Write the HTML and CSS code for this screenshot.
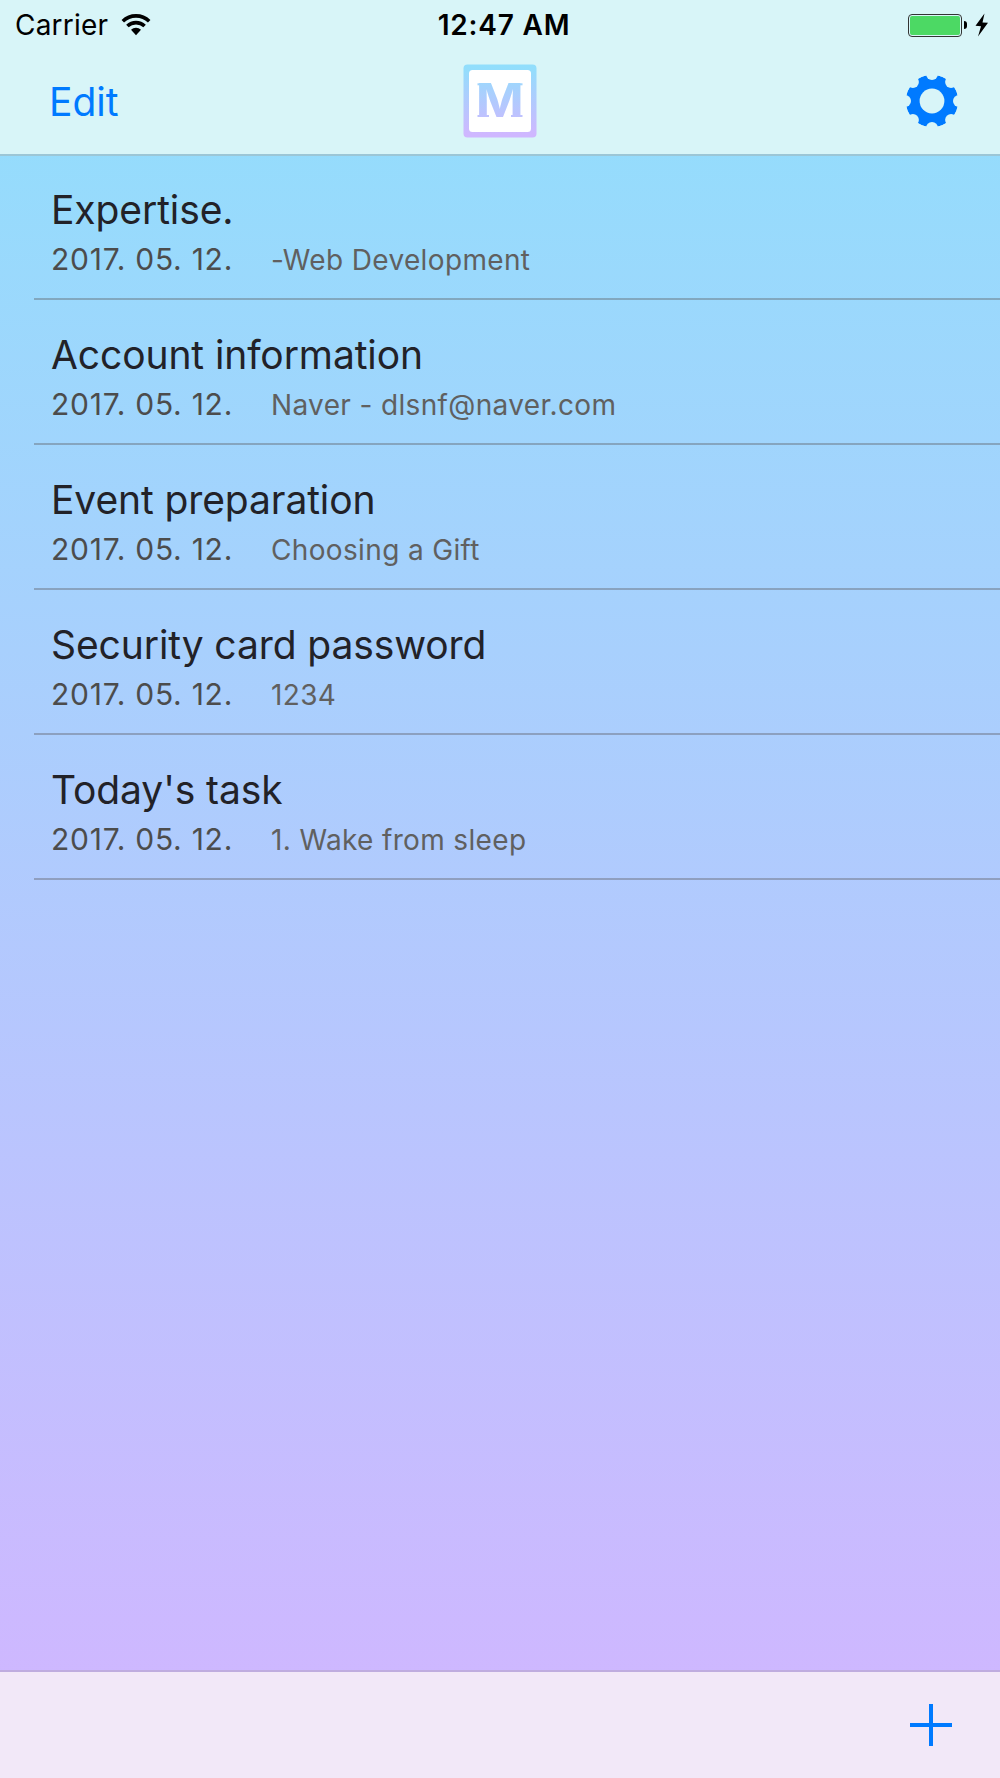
FILE: index.html
```html
<!DOCTYPE html>
<html lang="en">
<head>
    <meta charset="UTF-8">
    <meta name="viewport" content="width=device-width, initial-scale=1.0">
    <title>Memo</title>
    <link rel="stylesheet" href="styles.css">
</head>
<body>
    <header>
        <div class="status-bar">
            <div class="carrier">
                <span class="carrier-name">Carrier</span>
                <svg class="wifi" viewBox="0 0 30 22">
                    <path d="M1.8 7.2 A19 19 0 0 1 28.2 7.2" fill="none" stroke="#000" stroke-width="3.6"/>
                    <path d="M6.4 12 A12.6 12.6 0 0 1 23.6 12" fill="none" stroke="#000" stroke-width="3.6"/>
                    <path d="M10 15.8 A7.4 7.4 0 0 1 20 15.8 L15 21.3 Z"/>
                </svg>
            </div>
            <span class="time">12:47 AM</span>
            <div class="power">
                <div class="battery"><div class="battery-level"></div></div>
                <div class="battery-cap"></div>
                <svg class="bolt" viewBox="0 0 14 24">
                    <path d="M9.5 0.5 L0.5 12.8 L6 13.3 L3 23.5 L13 9.8 L7.5 9.4 Z"/>
                </svg>
            </div>
        </div>
        <nav>
            <a class="edit" href="#">Edit</a>
            <svg class="logo" viewBox="0 0 74 74">
                <defs>
                    <linearGradient id="logo-fill" gradientUnits="userSpaceOnUse" x1="0" y1="4" x2="0" y2="70">
                        <stop offset="0" stop-color="#92defc"/>
                        <stop offset="1" stop-color="#cfb7ff"/>
                    </linearGradient>
                </defs>
                <rect x="0.5" y="0.5" width="73" height="73" rx="4" fill="url(#logo-fill)"/>
                <rect x="6" y="6" width="62" height="62" rx="3.5" fill="#fff"/>
                <text class="logo-letter" x="12.7" y="53" textLength="48" lengthAdjust="spacingAndGlyphs" fill="url(#logo-fill)">M</text>
                <!-- serifs -->
                <g fill="url(#logo-fill)">
                    <rect x="14.5" y="19.3" width="13.5" height="2"/>
                    <rect x="46" y="19.3" width="13.5" height="2"/>
                    <rect x="14.5" y="51" width="11.5" height="2"/>
                    <rect x="48" y="51" width="11.5" height="2"/>
                </g>
            </svg>
            <svg class="gear" viewBox="-27 -27 54 54">
                <mask id="gear-cut">
                    <circle r="26.3" fill="#fff"/>
                    <g fill="#000">
                        <circle r="12.4"/>
                        <circle cx="27" cy="0" r="6"/>
                        <circle cx="-27" cy="0" r="6"/>
                        <circle cx="0" cy="27" r="6"/>
                        <circle cx="0" cy="-27" r="6"/>
                        <circle cx="19.1" cy="19.1" r="6"/>
                        <circle cx="-19.1" cy="19.1" r="6"/>
                        <circle cx="19.1" cy="-19.1" r="6"/>
                        <circle cx="-19.1" cy="-19.1" r="6"/>
                    </g>
                </mask>
                <circle r="26.3" fill="#007aff" mask="url(#gear-cut)"/>
            </svg>
        </nav>
    </header>

    <main>
        <ul class="memo-list">
            <li class="memo">
                <h2>Expertise.</h2>
                <p><span class="date">2017. 05. 12.</span><span class="preview">-Web Development</span></p>
            </li>
            <li class="memo">
                <h2>Account information</h2>
                <p><span class="date">2017. 05. 12.</span><span class="preview">Naver - dlsnf@naver.com</span></p>
            </li>
            <li class="memo">
                <h2>Event preparation</h2>
                <p><span class="date">2017. 05. 12.</span><span class="preview">Choosing a Gift</span></p>
            </li>
            <li class="memo">
                <h2>Security card password</h2>
                <p><span class="date">2017. 05. 12.</span><span class="preview">1234</span></p>
            </li>
            <li class="memo">
                <h2>Today's task</h2>
                <p><span class="date">2017. 05. 12.</span><span class="preview">1. Wake from sleep</span></p>
            </li>
        </ul>
    </main>

    <footer>
        <svg class="add" viewBox="0 0 42 42">
            <path d="M21 0 V42 M0 21 H42" stroke="#007aff" stroke-width="4"/>
        </svg>
    </footer>
</body>
</html>
```

FILE: styles.css
```css
* {
    box-sizing: border-box;
}
body {
    display: flex;
    flex-direction: column;
    height: 1778px;
    margin: 0;
    font-family: Inter, "Liberation Sans", sans-serif;
    background: linear-gradient(#92defc 60px, #cfb7ff 1700px);
}
/* top bar */
header {
    height: 156px;
    background-color: #d8f5f8;
    border-bottom: 2px solid #9cc6d6;
}
.status-bar {
    display: grid;
    grid-template-columns: 1fr auto 1fr;
    align-items: center;
    height: 50px;
    padding: 0 11px 0 15px;
}
.carrier {
    display: flex;
    align-items: center;
    gap: 13px;
}
.carrier-name {
    font-size: 28px;
    letter-spacing: 0.2px;
}
.wifi {
    width: 30px;
    height: 22px;
}
.time {
    margin-left: 4px;
    font-size: 28px;
    font-weight: 600;
    letter-spacing: 0.8px;
}
.power {
    display: flex;
    justify-content: flex-end;
    align-items: center;
}
.battery {
    width: 54px;
    height: 23px;
    padding: 1px;
    border: 1px solid #333;
    border-radius: 4px;
}
.battery-level {
    height: 100%;
    background-color: #4cd964;
    border-radius: 2px;
}
.battery-cap {
    width: 3px;
    height: 8px;
    margin-left: 2px;
    background-color: #000;
    border-radius: 0 3px 3px 0;
}
.bolt {
    width: 14px;
    height: 24px;
    margin-left: 8px;
}
nav {
    display: grid;
    grid-template-columns: 1fr auto 1fr;
    align-items: center;
    height: 102px;
    padding: 0 41px 0 49px;
}
.edit {
    color: #007aff;
    font-size: 39px;
    text-decoration: none;
}
.logo {
    width: 74px;
    height: 74px;
    margin-right: 8px;
}
.logo-letter {
    font-family: Inter, sans-serif;
    font-size: 46px;
    font-weight: bold;
}
.gear {
    justify-self: end;
    width: 54px;
    height: 54px;
}
/* memo list */
main {
    flex: 1;
}
.memo-list {
    margin: 0;
    padding: 0 0 0 34px;
    list-style: none;
}
.memo {
    height: 145px;
    padding: 31px 0 0 17px;
    border-bottom: 2px solid rgba(85, 80, 80, 0.36);
}
.memo:first-child {
    height: 144px;
    padding-top: 30px;
}
.memo h2 {
    margin: 0;
    color: #222228;
    font-size: 39px;
    font-weight: 400;
    line-height: 48px;
    letter-spacing: -0.1px;
}
.memo p {
    display: flex;
    align-items: baseline;
    margin: 7px 0 0;
    line-height: 36px;
}
.date {
    width: 220px;
    color: #4c4c4c;
    font-size: 30px;
    letter-spacing: 0.75px;
}
.preview {
    color: #606060;
    font-size: 28px;
    letter-spacing: 0.35px;
}
/* bottom bar */
footer {
    display: flex;
    justify-content: flex-end;
    height: 108px;
    padding: 32px 48px 0 0;
    background-color: #f2e8f8;
    border-top: 2px solid #bfacdf;
}
.add {
    width: 42px;
    height: 42px;
}
```
